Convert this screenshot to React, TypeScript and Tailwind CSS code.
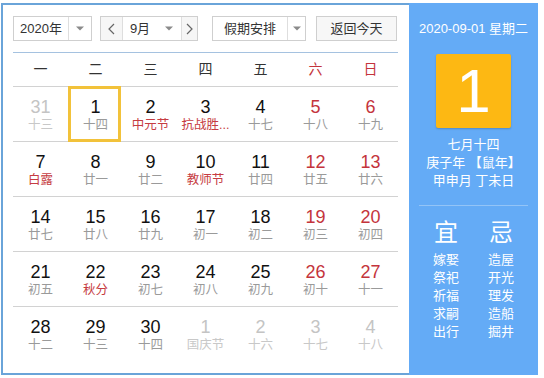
import React from 'react';

type Day = {
    n: number;
    sub: string;
    other?: boolean;
    holiday?: boolean;
    selected?: boolean;
};

const weeks: Day[][] = [
    [
        { n: 31, sub: '十三', other: true },
        { n: 1, sub: '十四', selected: true },
        { n: 2, sub: '中元节', holiday: true },
        { n: 3, sub: '抗战胜...', holiday: true },
        { n: 4, sub: '十七' },
        { n: 5, sub: '十八' },
        { n: 6, sub: '十九' },
    ],
    [
        { n: 7, sub: '白露', holiday: true },
        { n: 8, sub: '廿一' },
        { n: 9, sub: '廿二' },
        { n: 10, sub: '教师节', holiday: true },
        { n: 11, sub: '廿四' },
        { n: 12, sub: '廿五' },
        { n: 13, sub: '廿六' },
    ],
    [
        { n: 14, sub: '廿七' },
        { n: 15, sub: '廿八' },
        { n: 16, sub: '廿九' },
        { n: 17, sub: '初一' },
        { n: 18, sub: '初二' },
        { n: 19, sub: '初三' },
        { n: 20, sub: '初四' },
    ],
    [
        { n: 21, sub: '初五' },
        { n: 22, sub: '秋分', holiday: true },
        { n: 23, sub: '初七' },
        { n: 24, sub: '初八' },
        { n: 25, sub: '初九' },
        { n: 26, sub: '初十' },
        { n: 27, sub: '十一' },
    ],
    [
        { n: 28, sub: '十二' },
        { n: 29, sub: '十三' },
        { n: 30, sub: '十四' },
        { n: 1, sub: '国庆节', other: true },
        { n: 2, sub: '十六', other: true },
        { n: 3, sub: '十七', other: true },
        { n: 4, sub: '十八', other: true },
    ],
];

const weekdays = ['一', '二', '三', '四', '五', '六', '日'];
const yi = ['嫁娶', '祭祀', '祈福', '求嗣', '出行'];
const ji = ['造屋', '开光', '理发', '造船', '掘井'];

const Caret = () => (
    <svg width="8" height="5" viewBox="0 0 8 5">
        <path d="M0 0.5 L8 0.5 L4 4.5 Z" fill="#8a8a8a" />
    </svg>
);

const Chevron = ({ dir }: { dir: 'left' | 'right' }) => (
    <svg width="7" height="12" viewBox="0 0 7 12">
        <polyline
            points={dir === 'left' ? '6,1 1,6 6,11' : '1,1 6,6 1,11'}
            fill="none"
            stroke="#666"
            strokeWidth="1.2"
        />
    </svg>
);

const DayCell: React.FC<{ day: Day; weekend: boolean }> = ({ day, weekend }) => {
    let numColor = 'text-[#111]';
    let subColor = 'text-[#9a9a9a]';
    if (day.other) {
        numColor = 'text-[#c4c4c4]';
        subColor = 'text-[#c8c8c8]';
    } else {
        if (weekend) numColor = 'text-[#c4343c]';
        if (day.holiday) subColor = 'text-[#c63c42]';
    }
    return (
        <div className="relative flex flex-col items-center pt-[9px]">
            {day.selected && (
                <div className="absolute left-0 top-[-1px] w-[53px] h-[56px] border-[3px] border-[#f2c23a]" />
            )}
            <div className={`text-[18px] leading-[22px] ${numColor}`}>{day.n}</div>
            <div className={`text-[12.5px] leading-[14px] whitespace-nowrap ${subColor}`}>{day.sub}</div>
        </div>
    );
};

const App: React.FC = () => {
    return (
        <div
            className="w-[544px] h-[378px] bg-white overflow-hidden"
            style={{ fontFamily: '"Liberation Sans", "Noto Sans CJK SC", sans-serif' }}
        >
            <div className="flex ml-[1px] mt-[3px] h-[372px]">
                {/* calendar side */}
                <div className="w-[408px] h-full border-l-2 border-t-2 border-b-2 border-[#6aa4d9] pl-[10px] pr-[10px]">
                    {/* toolbar */}
                    <div className="flex items-center h-[25px] mt-[11px] text-[13px] text-[#333]">
                        <div className="flex w-[79px] h-full border border-[#cfcfcf] bg-white">
                            <div className="w-[55px] flex items-center justify-center border-r border-[#dedede]">2020年</div>
                            <div className="flex-1 flex items-center justify-center">
                                <Caret />
                            </div>
                        </div>
                        <div className="flex w-[98px] h-full ml-[8px] border border-[#cfcfcf] bg-white">
                            <div className="w-[22px] flex items-center justify-center border-r border-[#dedede] bg-[#f6f6f6]">
                                <Chevron dir="left" />
                            </div>
                            <div className="w-[34px] flex items-center justify-center">9月</div>
                            <div className="w-[24px] flex items-center justify-center">
                                <Caret />
                            </div>
                            <div className="flex-1 flex items-center justify-center border-l border-[#dedede] bg-[#f6f6f6]">
                                <Chevron dir="right" />
                            </div>
                        </div>
                        <div className="flex w-[94px] h-full ml-[14px] border border-[#cfcfcf] bg-white">
                            <div className="w-[75px] flex items-center justify-center border-r border-[#dedede]">假期安排</div>
                            <div className="flex-1 flex items-center justify-center">
                                <Caret />
                            </div>
                        </div>
                        <div className="flex w-[81px] h-full ml-[10px] items-center justify-center border border-[#cfcfcf] bg-[#f7f7f7]">
                            返回今天
                        </div>
                    </div>

                    {/* weekday header */}
                    <div className="mt-[11px] w-[385px] border-t border-[#a5c2e0]">
                        <div className="grid grid-cols-7 h-[34px] border-b border-[#d2d2d2] items-center text-[14px]">
                            {weekdays.map((w, i) => (
                                <div
                                    key={w}
                                    className={`text-center ${i >= 5 ? 'text-[#c4343c]' : 'text-[#333]'}`}
                                >
                                    {w}
                                </div>
                            ))}
                        </div>

                        {weeks.map((week, wi) => (
                            <div
                                key={wi}
                                className={`grid grid-cols-7 h-[55px] ${wi < weeks.length - 1 ? 'border-b border-[#d2d2d2]' : ''}`}
                            >
                                {week.map((d, di) => (
                                    <DayCell key={di} day={d} weekend={di >= 5} />
                                ))}
                            </div>
                        ))}
                    </div>
                </div>

                {/* detail panel */}
                <div className="w-[129px] h-full bg-[#64abf6] flex flex-col items-center text-white">
                    <div className="mt-[17px] text-[13px] leading-[18px]">2020-09-01 星期二</div>
                    <div className="mt-[16px] w-[75px] h-[74px] rounded-[2px] bg-[#fdb813] shadow-[0_1px_2px_rgba(0,0,0,0.2)] flex items-center justify-center text-[62px] leading-none">
                        1
                    </div>
                    <div className="mt-[8px] text-[13px] leading-[18px] text-center">
                        <div>七月十四</div>
                        <div>庚子年 【鼠年】</div>
                        <div>甲申月 丁未日</div>
                    </div>
                    <div className="mt-[15px] w-[109px] h-px bg-[#93c4f7]" />
                    <div className="mt-[12px] flex gap-[15px]">
                        <div className="w-[40px] flex flex-col items-center">
                            <div className="text-[24px] leading-[30px]">宜</div>
                            <div className="mt-[3px] text-[13px] leading-[18px] text-center">
                                {yi.map((t) => (
                                    <div key={t}>{t}</div>
                                ))}
                            </div>
                        </div>
                        <div className="w-[40px] flex flex-col items-center">
                            <div className="text-[24px] leading-[30px]">忌</div>
                            <div className="mt-[3px] text-[13px] leading-[18px] text-center">
                                {ji.map((t) => (
                                    <div key={t}>{t}</div>
                                ))}
                            </div>
                        </div>
                    </div>
                </div>
            </div>
        </div>
    );
};

export default App;
